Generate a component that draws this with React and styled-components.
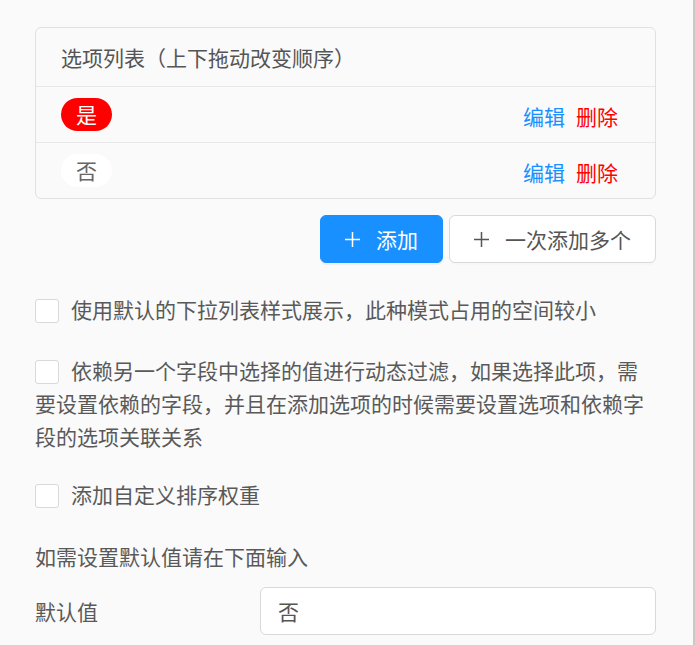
import React from 'react';
import styled, { createGlobalStyle } from 'styled-components';

const GlobalStyle = createGlobalStyle`
  html, body {
    margin: 0;
    padding: 0;
    background: #fafafa;
  }
  body {
    font-family: "Noto Sans CJK SC", "Noto Sans", sans-serif;
    color: #595959;
  }
  * {
    box-sizing: border-box;
  }
`;

const Frame = styled.div`
  width: 695px;
  min-height: 645px;
  padding: 27px 37px 0 35px;
  border-right: 2px solid #c9c9c9;
  background: #fafafa;
  font-size: 21px;
  line-height: 33px;
`;

const Card = styled.div`
  border: 1px solid #e1e1e1;
  border-radius: 6px;
`;

const CardHeader = styled.div`
  height: 58px;
  display: flex;
  align-items: center;
  padding: 0 25px;
  color: #555;
`;

const OptionRow = styled.div`
  height: 56px;
  display: flex;
  align-items: center;
  justify-content: space-between;
  padding: 0 37px 0 25px;
  border-top: 1px solid #e8e8e8;
`;

const Tag = styled.span`
  width: 51px;
  height: 33px;
  border-radius: 17px;
  display: inline-flex;
  align-items: center;
  justify-content: center;
  background: ${({ $active }) => ($active ? '#ff0000' : '#ffffff')};
  color: ${({ $active }) => ($active ? '#ffffff' : '#666666')};
`;

const Actions = styled.div`
  display: flex;
  gap: 11px;
  padding-top: 4px;
`;

const ActionLink = styled.a`
  color: ${({ $danger }) => ($danger ? '#ff0000' : '#1890ff')};
  cursor: pointer;
`;

const ButtonBar = styled.div`
  display: flex;
  justify-content: flex-end;
  gap: 6px;
  margin-top: 16px;
`;

const Button = styled.button`
  height: 48px;
  width: ${({ $width }) => $width}px;
  display: inline-flex;
  align-items: center;
  justify-content: center;
  gap: 16px;
  border-radius: 6px;
  font: inherit;
  cursor: pointer;
  border: 1px solid ${({ $primary }) => ($primary ? '#1890ff' : '#d9d9d9')};
  background: ${({ $primary }) => ($primary ? '#1890ff' : '#ffffff')};
  color: ${({ $primary }) => ($primary ? '#ffffff' : '#555555')};
  box-shadow: ${({ $primary }) => ($primary ? '0 2px 0 rgba(0,0,0,0.045)' : '0 2px 0 rgba(0,0,0,0.016)')};
`;

const CheckLine = styled.label`
  display: block;
  margin-top: ${({ $top }) => $top}px;
  cursor: pointer;
`;

const Box = styled.span`
  display: inline-block;
  width: 24px;
  height: 24px;
  margin-right: 12px;
  vertical-align: -5px;
  background: #fff;
  border: 1px solid #d9d9d9;
  border-radius: 3px;
`;

const Hint = styled.div`
  margin-top: 29px;
`;

const FieldRow = styled.div`
  display: grid;
  grid-template-columns: 225px 1fr;
  align-items: center;
  margin-top: 14px;
`;

const Input = styled.div`
  height: 48px;
  display: flex;
  align-items: center;
  padding: 0 17px;
  background: #fff;
  border: 1px solid #d9d9d9;
  border-radius: 6px;
  color: #555;
`;

const PlusIcon = () => (
  <svg width="15" height="15" viewBox="0 0 15 15" fill="none" stroke="currentColor" strokeWidth="1.5">
    <path d="M7.5 0v15M0 7.5h15" />
  </svg>
);

const options = [
  { label: '是', active: true },
  { label: '否', active: false },
];

export default function App() {
  return (
    <>
      <GlobalStyle />
      <Frame>
        <Card>
          <CardHeader>选项列表（上下拖动改变顺序）</CardHeader>
          {options.map((o) => (
            <OptionRow key={o.label}>
              <Tag $active={o.active}>{o.label}</Tag>
              <Actions>
                <ActionLink>编辑</ActionLink>
                <ActionLink $danger>删除</ActionLink>
              </Actions>
            </OptionRow>
          ))}
        </Card>

        <ButtonBar>
          <Button $primary $width={123}>
            <PlusIcon />
            <span>添加</span>
          </Button>
          <Button $width={207}>
            <PlusIcon />
            <span>一次添加多个</span>
          </Button>
        </ButtonBar>

        <CheckLine $top={30}>
          <Box />
          使用默认的下拉列表样式展示，此种模式占用的空间较小
        </CheckLine>
        <CheckLine $top={28}>
          <Box />
          依赖另一个字段中选择的值进行动态过滤，如果选择此项，需要设置依赖的字段，并且在添加选项的时候需要设置选项和依赖字段的选项关联关系
        </CheckLine>
        <CheckLine $top={25}>
          <Box />
          添加自定义排序权重
        </CheckLine>

        <Hint>如需设置默认值请在下面输入</Hint>
        <FieldRow>
          <span>默认值</span>
          <Input>否</Input>
        </FieldRow>
      </Frame>
    </>
  );
}
